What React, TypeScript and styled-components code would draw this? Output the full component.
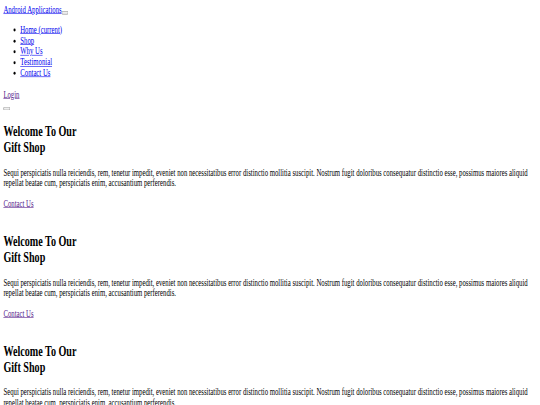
import React from "react"
import styled, { createGlobalStyle } from "styled-components"

const GlobalStyle = createGlobalStyle`
  html,
  body {
    margin: 0;
    padding: 0;
    background: #ffffff;
    overflow: hidden;
  }
`

// the page is laid out at a 1280px wide desktop size and squeezed into the frame
const Viewport = styled.div`
  width: 1280px;
  padding: 8px;
  box-sizing: border-box;
  transform: scale(0.421875, 0.584);
  transform-origin: 0 0;

  font-family: "Liberation Serif", "Times New Roman", serif;
  font-size: 16px;
  line-height: 1.15;
  color: #000000;
`

const Link = styled.a<{ $visited?: boolean }>`
  color: ${(p) => (p.$visited ? "#551a8b" : "#0000ee")};
  text-decoration: underline;
  cursor: pointer;
`

const Header = styled.header`
  display: block;
`

const Brand = styled.div`
  display: block;
`

const Toggler = styled.button`
  font: inherit;
  font-size: 13px;
  line-height: normal;
  padding: 1px 6px;
  vertical-align: baseline;
`

const NavList = styled.ul`
  margin: 16px 0;
  padding-left: 40px;
  list-style: disc;
`

const NavItem = styled.li`
  display: list-item;
`

const LoginBox = styled.div`
  margin-top: 19px;
`

const SearchBox = styled.div`
  display: block;
  height: 20px;
`

const Slide = styled.section`
  display: block;
  padding-bottom: 22px;
`

const Title = styled.h1`
  margin: 19.92px 0;
  font-size: 24px;
  font-weight: bold;
`

const Text = styled.p`
  margin: 16px 0;
`

const ButtonBox = styled.div`
  display: block;
`

const navItems = ["Home (current)", "Shop", "Why Us", "Testimonial", "Contact Us"]

const text =
  "Sequi perspiciatis nulla reiciendis, rem, tenetur impedit, eveniet non necessitatibus error distinctio mollitia suscipit. Nostrum fugit doloribus consequatur distinctio esse, possimus maiores aliquid repellat beatae cum, perspiciatis enim, accusantium perferendis."

const App: React.FC = () => {
  return (
    <>
      <GlobalStyle />
      <Viewport>
        <Header>
          <Brand>
            <Link href="#">Android Applications</Link>
            <Toggler type="button" aria-label="Toggle navigation" />
          </Brand>
          <NavList>
            {navItems.map((item) => (
              <NavItem key={item}>
                <Link href="#">{item}</Link>
              </NavItem>
            ))}
          </NavList>
          <LoginBox>
            <Link href="#" $visited>
              Login
            </Link>
          </LoginBox>
          <SearchBox>
            <Toggler type="button" aria-label="Search" />
          </SearchBox>
        </Header>
        {[0, 1, 2].map((i) => (
          <Slide key={i}>
            <Title>
              Welcome To Our
              <br />
              Gift Shop
            </Title>
            <Text>{text}</Text>
            <ButtonBox>
              <Link href="#" $visited>
                Contact Us
              </Link>
            </ButtonBox>
          </Slide>
        ))}
      </Viewport>
    </>
  )
}

export default App
